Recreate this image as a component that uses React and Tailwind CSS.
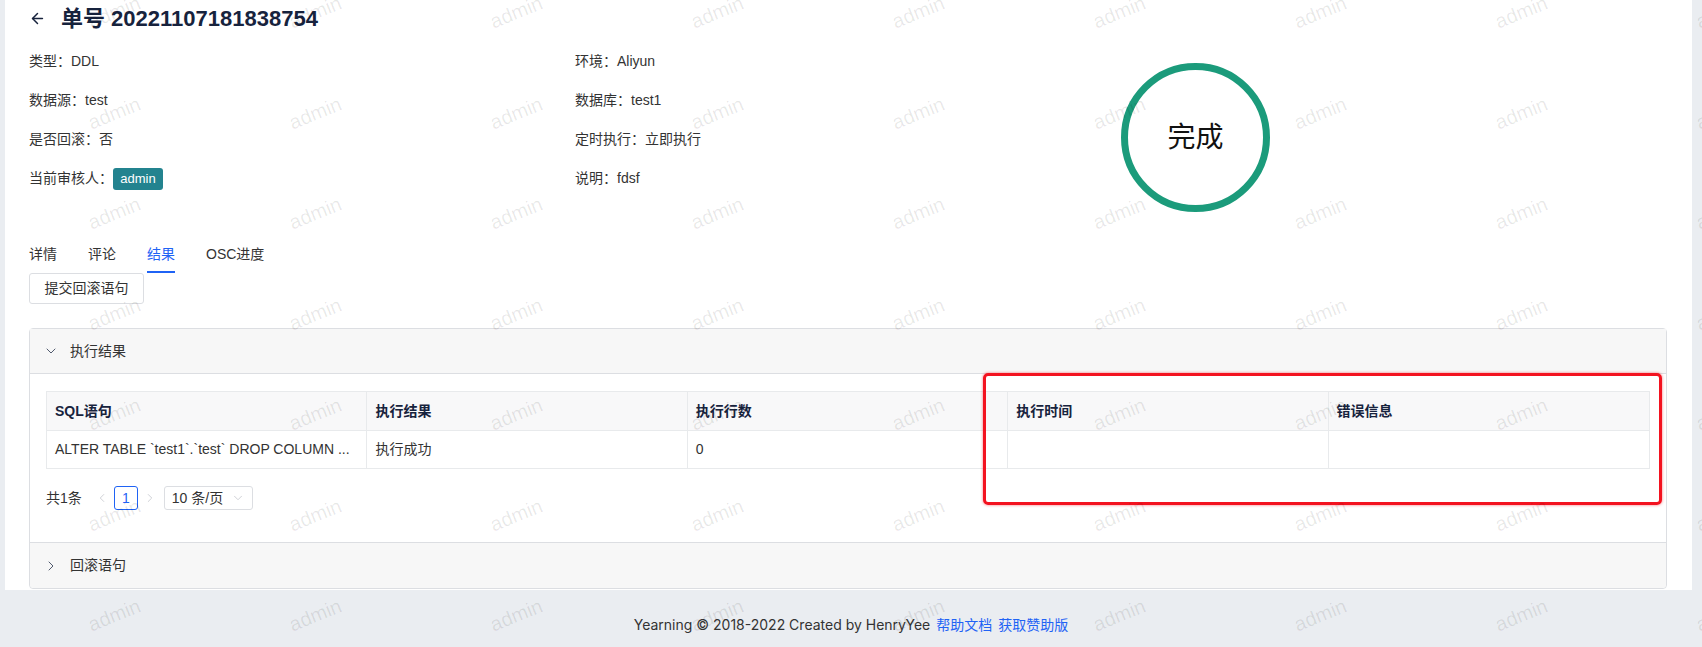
import React from "react";
import { ArrowLeft, ChevronDown, ChevronRight, ChevronLeft } from "lucide-react";

const leftInfo = [
  ["类型", "DDL"],
  ["数据源", "test"],
  ["是否回滚", "否"],
];
const rightInfo = [
  ["环境", "Aliyun"],
  ["数据库", "test1"],
  ["定时执行", "立即执行"],
  ["说明", "fdsf"],
];
const tabs = ["详情", "评论", "结果", "OSC进度"];
const columns = ["SQL语句", "执行结果", "执行行数", "执行时间", "错误信息"];
const row = ["ALTER TABLE `test1`.`test` DROP COLUMN ...", "执行成功", "0", "", ""];

function Watermark() {
  const cells = Array.from({ length: 9 * 7 });
  return (
    <div className="pointer-events-none absolute left-[14px] top-[-38px] grid grid-cols-[repeat(9,201px)] auto-rows-[100.5px]">
      {cells.map((_, i) => (
        <div key={i} className="flex items-center justify-center">
          <span className="-rotate-[22deg] text-[20px] text-black/[0.09]">admin</span>
        </div>
      ))}
    </div>
  );
}

export default function App() {
  return (
    <div
      className="relative h-[647px] overflow-hidden bg-[#eaedf1] text-[14px] text-[#333]"
      style={{ fontFamily: '"Liberation Sans", "Noto Sans CJK SC", sans-serif' }}
    >
      <div className="ml-[5px] mr-[10px] bg-white pl-6 pr-[25px] pb-px">
        {/* header */}
        <div className="flex h-[36px] items-center">
          <ArrowLeft size={17} strokeWidth={2.1} className="text-[#17233d]" />
          <h1 className="ml-[15px] text-[22px] font-bold text-[#17233d]">单号 20221107181838754</h1>
        </div>

        <div className="mt-[6px] grid grid-cols-3">
          <div>
            {leftInfo.map(([k, v]) => (
              <div key={k} className="flex h-[39px] items-center">{k}：{v}</div>
            ))}
            <div className="flex h-[39px] items-center">
              当前审核人：
              <span className="flex h-[22px] w-[50px] items-center justify-center rounded-[3px] bg-[#23838f] text-[13px] font-medium text-white">admin</span>
            </div>
          </div>
          <div>
            {rightInfo.map(([k, v]) => (
              <div key={k} className="flex h-[39px] items-center">{k}：{v}</div>
            ))}
          </div>
          <div className="pt-[21px]">
            <div className="flex h-[149px] w-[149px] items-center justify-center rounded-full border-[7px] border-[#1b9b7b] text-[28px] text-[#111]">
              完成
            </div>
          </div>
        </div>

        {/* tabs */}
        <div className="mt-[32px] flex gap-[31px]">
          {tabs.map((t) => (
            <div
              key={t}
              className={
                t === "结果"
                  ? "border-b-2 border-[#1f63f5] pb-[7px] leading-[20px] text-[#1f63f5]"
                  : "border-b-2 border-transparent pb-[7px] leading-[20px] text-[#333]"
              }
            >
              {t}
            </div>
          ))}
        </div>
        <button className="flex h-[31px] w-[115px] items-center justify-center rounded-[3px] border border-[#dcdee2] bg-white text-[#333]">
          提交回滚语句
        </button>

        {/* collapse */}
        <div className="mt-[24px] rounded-[4px] border border-[#dcdee2]">
          <div className="flex h-[45px] items-center border-b border-[#dcdee2] bg-[#f7f7f7] pl-[13px]">
            <ChevronDown size={16} strokeWidth={1.5} className="text-[#515a6e]" />
            <span className="ml-[11px]">执行结果</span>
          </div>
          <div className="px-[16px] pt-[17px] pb-[32px]">
            <div className="border border-[#e8eaec]">
              <div className="grid grid-cols-5 bg-[#f8f8f9]">
                {columns.map((c, i) => (
                  <div
                    key={c}
                    className={
                      i < 4
                        ? "flex h-[38px] items-center border-r border-[#e8eaec] px-[8px] font-bold text-[#17233d]"
                        : "flex h-[38px] items-center px-[8px] font-bold text-[#17233d]"
                    }
                  >
                    {c}
                  </div>
                ))}
              </div>
              <div className="grid grid-cols-5 border-t border-[#e8eaec]">
                {row.map((c, i) => (
                  <div
                    key={i}
                    className={
                      i < 4
                        ? "flex h-[37px] items-center overflow-hidden whitespace-nowrap border-r border-[#e8eaec] px-[8px]"
                        : "flex h-[37px] items-center overflow-hidden whitespace-nowrap px-[8px]"
                    }
                  >
                    {c}
                  </div>
                ))}
              </div>
            </div>

            {/* pagination */}
            <div className="mt-[17px] flex h-[24px] items-center">
              <span>共1条</span>
              <ChevronLeft size={14} strokeWidth={1.4} className="ml-[13px] text-[#c5c8ce]" />
              <span className="ml-[5px] flex h-[24px] w-[24px] items-center justify-center rounded-[3px] border border-[#1f63f5] text-[#1f63f5]">1</span>
              <ChevronRight size={14} strokeWidth={1.4} className="ml-[5px] text-[#c5c8ce]" />
              <div className="ml-[7px] flex h-[24px] w-[89px] items-center justify-between rounded-[3px] border border-[#dcdee2] pl-[7px] pr-[7px]">
                <span>10 条/页</span>
                <ChevronDown size={14} strokeWidth={1.4} className="text-[#c5c8ce]" />
              </div>
            </div>
          </div>
          <div className="flex h-[46px] items-center rounded-b-[4px] border-t border-[#dcdee2] bg-[#f7f7f7] pl-[13px]">
            <ChevronRight size={16} strokeWidth={1.5} className="text-[#515a6e]" />
            <span className="ml-[11px]">回滚语句</span>
          </div>
        </div>
      </div>

      {/* footer */}
      <div className="flex justify-center pt-[25px] leading-[20px] text-[#333]">
        <span style={{ fontFamily: 'Inter, "Noto Sans CJK SC", sans-serif' }}>Yearning © 2018-2022 Created by HenryYee</span>
        <span className="ml-[6px] text-[#1f63f5]">帮助文档</span>
        <span className="ml-[6px] text-[#1f63f5]">获取赞助版</span>
      </div>

      {/* annotation box */}
      <div className="pointer-events-none absolute left-[983px] top-[373px] h-[132px] w-[679px] rounded-[5px] border-[3px] border-[#f3121f] shadow-[0_0_3px_rgba(243,18,31,0.6)]" />

      <Watermark />
    </div>
  );
}
